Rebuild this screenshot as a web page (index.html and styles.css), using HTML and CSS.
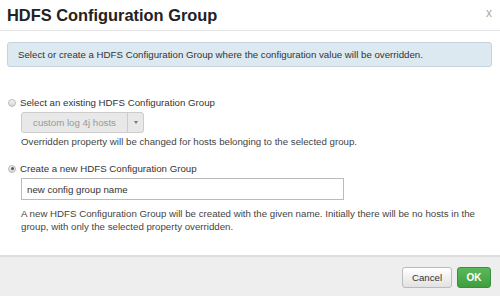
FILE: index.html
```html
<!DOCTYPE html>
<html lang="en">
<head>
    <meta charset="UTF-8">
    <title>HDFS Configuration Group</title>
    <link rel="stylesheet" href="styles.css">
</head>
<body>

<div class="modal">
    <div class="modal-header">
        <h3>HDFS Configuration Group</h3>
        <span class="close">x</span>
    </div>

    <div class="modal-body">
        <div class="alert">
            Select or create a HDFS Configuration Group where the configuration value will be overridden.
        </div>

        <div class="option">
            <label class="radio-label">
                <span class="radio"></span>
                Select an existing HDFS Configuration Group
            </label>
            <div class="option-content">
                <div class="btn-group">
                    <span class="btn-select">custom log 4j hosts</span>
                    <span class="btn-caret"><span class="caret"></span></span>
                </div>
                <p class="help">Overridden property will be changed for hosts belonging to the selected group.</p>
            </div>
        </div>

        <div class="option option-new">
            <label class="radio-label">
                <span class="radio checked"></span>
                Create a new HDFS Configuration Group
            </label>
            <div class="option-content">
                <input type="text" class="text-input" value="new config group name">
                <p class="help">A new HDFS Configuration Group will be created with the given name. Initially there will be no hosts in the group, with only the selected property overridden.</p>
            </div>
        </div>
    </div>

    <div class="modal-footer">
        <button class="btn btn-cancel">Cancel</button>
        <button class="btn btn-ok">OK</button>
    </div>
</div>

</body>
</html>
```

FILE: styles.css
```css
body {
    margin: 0;
    padding: 0;
    background-color: #fff;
    font-family: "Liberation Sans", Arial, sans-serif;
    font-size: 9.7px;
    color: #333;
}
.modal {
    width: 500px;
    height: 296px;
    display: flex;
    flex-direction: column;
}
.modal-header {
    height: 30px;
    padding: 0 8px 0 7px;
    display: flex;
    align-items: center;
    justify-content: space-between;
    border-bottom: 1px solid #e5e5e5;
}
.modal-header h3 {
    margin: 0;
    font-size: 16.4px;
    font-weight: bold;
    color: #222;
}
.close {
    font-size: 12px;
    color: #aaa;
    margin-top: -5px;
}
.modal-body {
    flex: 1;
    padding: 11px 8px 0 7px;
}
.alert {
    height: 23px;
    line-height: 23px;
    padding: 0 10px;
    background-color: #dce9f1;
    border: 1px solid #c5d3dc;
    border-radius: 3px;
    color: #333;
}
.option {
    margin-top: 30px;
}
.option-new {
    margin-top: 15px;
}
.radio-label {
    display: flex;
    align-items: center;
    gap: 4px;
    margin-left: 1px;
}
.radio {
    width: 6px;
    height: 6px;
    border-radius: 50%;
    border: 1px solid #bbb;
    background: linear-gradient(#f4f4f4, #d6d6d6);
    display: flex;
    align-items: center;
    justify-content: center;
}
.radio.checked::after {
    content: "";
    width: 3px;
    height: 3px;
    border-radius: 50%;
    background-color: #555;
}
.option-content {
    padding-left: 14px;
    margin-top: 4px;
}
.btn-group {
    display: inline-flex;
    height: 19px;
    border: 1px solid #ccc;
    border-radius: 3px;
    background-color: #e8e8e8;
}
.btn-select {
    width: 105px;
    line-height: 19px;
    text-align: center;
    color: #999;
    border-right: 1px solid #ccc;
}
.btn-caret {
    width: 15px;
    display: flex;
    align-items: center;
    justify-content: center;
}
.caret {
    border-top: 3px solid #777;
    border-left: 2px solid transparent;
    border-right: 2px solid transparent;
}
.help {
    margin: 2px 0 0 0;
    line-height: 13px;
    color: #444;
}
.text-input {
    display: block;
    box-sizing: border-box;
    width: 323px;
    height: 22px;
    margin: 0;
    padding: 0 5px;
    border: 1px solid #bbb;
    font-family: inherit;
    font-size: 9.7px;
    color: #333;
}
.option-new .help {
    margin-top: 7px;
    width: 460px;
}
.modal-footer {
    height: 39px;
    border-top: 2px solid #ddd;
    background-color: #eee;
    display: flex;
    align-items: center;
    justify-content: flex-end;
    gap: 5px;
    padding: 0 9px 0 0;
}
.btn {
    height: 21px;
    border-radius: 3px;
    font-family: inherit;
    font-size: 9.7px;
    padding: 0;
    margin-top: 1px;
}
.btn-cancel {
    width: 50px;
    border: 1px solid #bbb;
    background: linear-gradient(#fff, #e2e2e2);
    color: #333;
}
.btn-ok {
    width: 34px;
    border: 1px solid #3a8f3a;
    background: linear-gradient(#5bb75b, #3f9f3f);
    color: #fff;
    font-weight: bold;
    font-size: 10px;
}
```
